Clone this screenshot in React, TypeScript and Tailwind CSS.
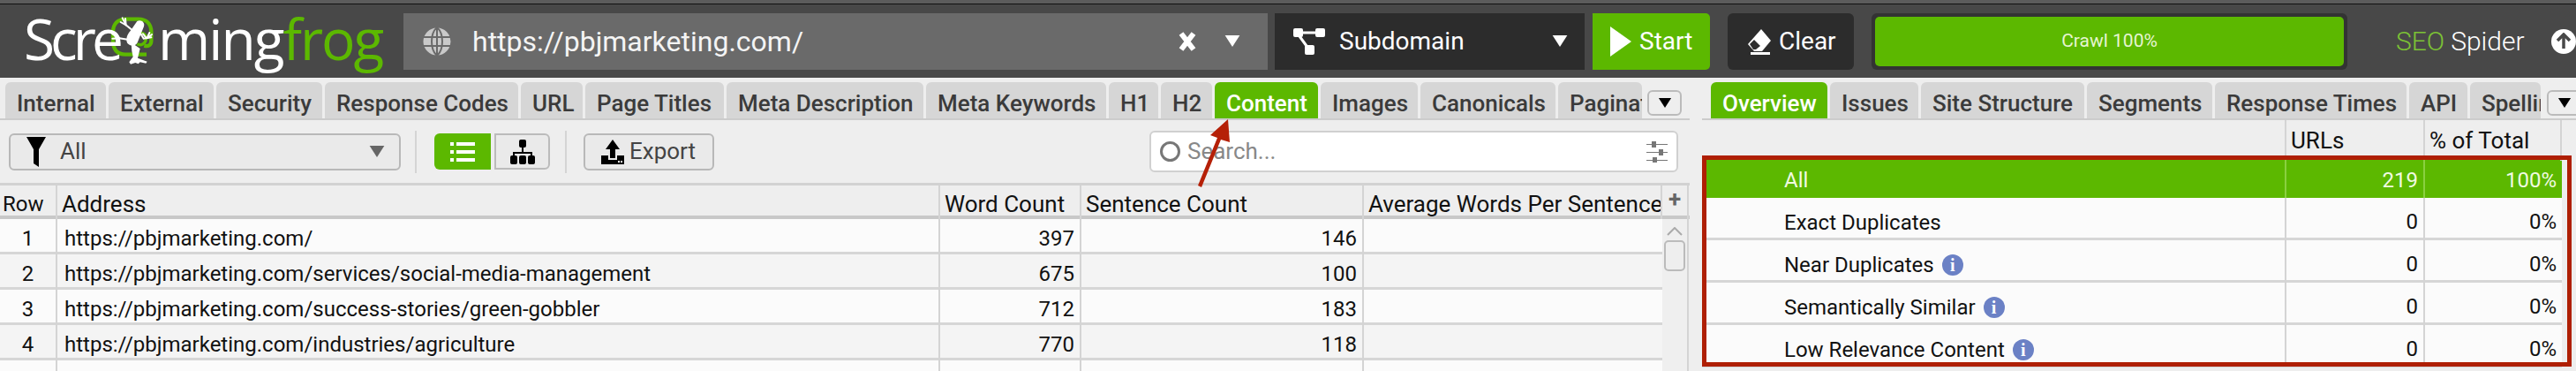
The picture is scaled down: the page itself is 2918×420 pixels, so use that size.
const leftTabs = [
  { label: "Internal", width: "w-[114px]" },
  { label: "External", width: "w-[119px]" },
  { label: "Security", width: "w-[120px]" },
  { label: "Response Codes", width: "w-[219px]" },
  { label: "URL", width: "w-[70px]" },
  { label: "Page Titles", width: "w-[157px]" },
  { label: "Meta Description", width: "w-[223px]" },
  { label: "Meta Keywords", width: "w-[204px]" },
  { label: "H1", width: "w-[56px]" },
  { label: "H2", width: "w-[58px]" },
  { label: "Content", width: "w-[117px]", active: true },
  { label: "Images", width: "w-[110px]" },
  { label: "Canonicals", width: "w-[153px]" },
  { label: "Pagination", width: "w-[95px]" },
];

const rightTabs = [
  { label: "Overview", width: "w-[132px]", active: true },
  { label: "Issues", width: "w-[100px]" },
  { label: "Site Structure", width: "w-[185px]" },
  { label: "Segments", width: "w-[142px]" },
  { label: "Response Times", width: "w-[217px]" },
  { label: "API", width: "w-[66px]" },
  { label: "Spelling", width: "w-[80px]" },
];

const urls = [
  { row: 1, address: "https://pbjmarketing.com/", words: 397, sentences: 146, bg: "bg-[#fbfbfb]" },
  { row: 2, address: "https://pbjmarketing.com/services/social-media-management", words: 675, sentences: 100, bg: "bg-[#f4f4f4]" },
  { row: 3, address: "https://pbjmarketing.com/success-stories/green-gobbler", words: 712, sentences: 183, bg: "bg-[#fbfbfb]" },
  { row: 4, address: "https://pbjmarketing.com/industries/agriculture", words: 770, sentences: 118, bg: "bg-[#f4f4f4]" },
];

const overview = [
  { name: "Exact Duplicates" },
  { name: "Near Duplicates", info: true },
  { name: "Semantically Similar", info: true },
  { name: "Low Relevance Content", info: true },
];

function Caret({ className }: { className: string }) {
  return (
    <svg viewBox="0 0 18 14" className={className}>
      <path d="M0 0H18L9 14Z" fill="currentColor" />
    </svg>
  );
}

function Tab({ label, width, active }: { label: string; width: string; active?: boolean }) {
  return (
    <div
      className={`${width} h-[41px] shrink-0 overflow-hidden whitespace-nowrap rounded-t-[6px] pl-[13px] text-[26px] leading-[49px] font-medium ${
        active ? "bg-[#5cb800] text-white" : "bg-[#d6d6d6] text-[#3b3b3b]"
      }`}
    >
      {label}
    </div>
  );
}

function OverflowButton({ className }: { className: string }) {
  return (
    <div className={`${className} flex h-[29px] w-[39px] shrink-0 items-center justify-center rounded-[6px] border-2 border-[#bbbbbb] bg-[#eeeeee]`}>
      <Caret className="h-[11px] w-[16px] text-black" />
    </div>
  );
}

function Frog() {
  return (
    <svg viewBox="0 0 225 225" className="h-[75px] w-[75px] shrink-0">
      <path d="M150 158H78C50 158 36 140 36 112V82C36 55 52 38 80 38H122C150 38 166 55 166 82V112C166 126 156 132 142 128" fill="none" stroke="#5cb800" strokeWidth="13" />
      <path d="M126 86C140 82 150 92 148 106C146 122 130 130 118 122" fill="none" stroke="#5cb800" strokeWidth="10" />
      <g fill="#fff">
        <path d="M118 45C130 38 146 48 141 63L119 118C112 132 94 130 85 120C78 107 84 90 95 78Z" />
        <path d="M98 118L128 138L120 170L152 182L148 188L128 184L122 190L112 186L96 191L91 184L104 166L100 146Z" />
      </g>
      <g fill="none" stroke="#fff" strokeWidth="6" strokeLinecap="round">
        <path d="M102 76L80 58L68 34" />
        <path d="M80 58L62 48M80 58L78 36" />
        <path d="M90 108L58 103L34 88" />
        <path d="M58 103L34 104M58 103L44 84" />
        <path d="M128 84L140 104L166 100" />
        <path d="M150 103L138 88M152 102L160 84M154 102L168 90" />
      </g>
    </svg>
  );
}

function Logo() {
  return (
    <div className="flex h-full w-[430px] shrink-0 items-center font-['Open_Sans'] text-[64px] leading-none text-white">
      <span className="w-[92px] shrink-0 -translate-y-[3px] tracking-[-5px]">Scre</span>
      <span className="-ml-[3px] -mr-[12px]"><Frog /></span>
      <span className="-translate-y-[3px] tracking-[-2px]">ming</span>
      <span className="-translate-y-[3px] tracking-[-2px] text-[#5cb800]">frog</span>
    </div>
  );
}

function Globe() {
  return (
    <svg viewBox="0 0 32 32" className="h-[32px] w-[32px] shrink-0">
      <circle cx="16" cy="16" r="15.5" fill="#c9c9c9" />
      <path d="M0 11H32M0 21H32M16 0V32" stroke="#6a6a6a" strokeWidth="2" />
      <path d="M16 0C8 7 8 25 16 32M16 0C24 7 24 25 16 32" fill="none" stroke="#6a6a6a" strokeWidth="2" />
    </svg>
  );
}

function SubdomainIcon() {
  return (
    <svg viewBox="0 0 36 30" className="h-[30px] w-[36px] shrink-0">
      <g fill="#fff">
        <rect x="0" y="0" width="11" height="10" rx="2" />
        <rect x="25" y="0" width="11" height="10" rx="2" />
        <rect x="13" y="19" width="11" height="11" rx="2" />
      </g>
      <path d="M10 5H26M7 9L15 20" stroke="#fff" strokeWidth="3" />
    </svg>
  );
}

function Eraser() {
  return (
    <svg viewBox="0 0 28 30" className="h-[30px] w-[28px] shrink-0">
      <path d="M16 1L27 14L17 26H8L1 18Z" fill="#fff" />
      <path d="M8 13L15 20L10 24H7L3 18Z" fill="#2c2c2c" />
      <rect x="4" y="27" width="22" height="3" fill="#fff" />
    </svg>
  );
}

function ListIcon() {
  return (
    <svg viewBox="0 0 28 24" className="h-[24px] w-[28px]">
      <path d="M0 1H4V5H0ZM7 1H28V5H7ZM0 10H4V14H0ZM7 10H28V14H7ZM0 19H4V23H0ZM7 19H28V23H7Z" fill="#fff" />
    </svg>
  );
}

function TreeIcon() {
  return (
    <svg viewBox="0 0 28 28" className="h-[28px] w-[28px]">
      <rect x="10" y="0" width="8" height="9" rx="2" />
      <path d="M14 8V16M4 20V15H24V20" fill="none" stroke="#000" strokeWidth="2" />
      <rect x="0" y="18" width="8" height="10" rx="2" />
      <rect x="10" y="18" width="8" height="10" rx="2" />
      <rect x="20" y="18" width="8" height="10" rx="2" />
    </svg>
  );
}

function ExportIcon() {
  return (
    <svg viewBox="0 0 26 28" className="h-[28px] w-[26px] shrink-0">
      <path d="M13 0L21 11H16V21H10V11H5Z" fill="#000" />
      <path d="M0 18H8V23H18V18H26V28H0Z" fill="#000" />
      <rect x="19" y="24" width="2" height="2" fill="#fff" />
      <rect x="22" y="24" width="2" height="2" fill="#fff" />
    </svg>
  );
}

function SlidersIcon() {
  return (
    <svg viewBox="0 0 24 24" className="h-[24px] w-[24px] shrink-0" fill="#777777">
      <path d="M0 3H24V4H0ZM0 12H24V13H0ZM0 21H24V22H0Z" />
      <rect x="6" y="0" width="5" height="7" />
      <rect x="14" y="9" width="5" height="7" />
      <rect x="7" y="18" width="5" height="7" />
    </svg>
  );
}

function InfoIcon() {
  return (
    <span className="ml-[9px] flex h-[24px] w-[24px] shrink-0 items-center justify-center rounded-full bg-[#6b81c5] font-['Liberation_Serif'] text-[20px] leading-none font-bold text-white">
      i
    </span>
  );
}

function App() {
  return (
    <div className="relative h-[420px] w-[2918px] overflow-hidden bg-[#eeeeee] font-['Roboto',sans-serif]">
      <div className="h-[4px] bg-[#5c5c5c]" />
      <div className="h-[1px] bg-[#111111]" />
      <div className="flex h-[83px] items-center bg-[#484848] pl-[27px] text-white">
        <Logo />
        <div className="flex h-[64px] w-[979px] shrink-0 items-center bg-[#6a6a6a] pl-[22px]">
          <Globe />
          <span className="ml-[24px] text-[32px] text-[#f4f4f4]">https://pbjmarketing.com/</span>
          <svg viewBox="0 0 20 24" className="ml-auto h-[24px] w-[20px] shrink-0">
            <path d="M3 3L17 21M17 3L3 21" fill="none" stroke="#fff" strokeWidth="6" />
          </svg>
          <Caret className="mr-[31px] ml-[32px] h-[13px] w-[18px] text-white" />
        </div>
        <div className="ml-[8px] flex h-[64px] w-[351px] shrink-0 items-center bg-[#2c2c2c] pl-[21px]">
          <SubdomainIcon />
          <span className="ml-[16px] text-[28px]">Subdomain</span>
          <Caret className="mr-[19px] ml-auto h-[13px] w-[18px] text-white" />
        </div>
        <div className="ml-[9px] flex h-[64px] w-[133px] shrink-0 items-center rounded-r-[5px] bg-[#5cb800] pl-[20px]">
          <svg viewBox="0 0 24 38" className="h-[38px] w-[24px] shrink-0">
            <path d="M0 2L24 19L0 36Z" fill="#fff" />
          </svg>
          <span className="ml-[9px] text-[28px]">Start</span>
        </div>
        <div className="ml-[20px] flex h-[64px] w-[143px] shrink-0 items-center rounded-[6px] bg-[#2c2c2c] pl-[22px]">
          <Eraser />
          <span className="ml-[8px] text-[28px]">Clear</span>
        </div>
        <div className="ml-[20px] flex h-[64px] w-[539px] shrink-0 rounded-[6px] bg-[#333333] py-[4px] pr-[4px] pl-[4px]">
          <div className="flex w-full items-center justify-center rounded-[5px] bg-[#5cb800] text-[21px] text-[#e6f5d0]">
            Crawl 100%
          </div>
        </div>
        <div className="ml-[55px] flex items-center text-[30px] font-light">
          <span className="text-[#7cc235]">SEO</span>
          <span className="ml-[7px]">Spider</span>
        </div>
        <div className="ml-[30px] flex h-[28px] w-[28px] shrink-0 items-center justify-center rounded-full bg-white">
          <svg viewBox="0 0 20 20" className="h-[20px] w-[20px]">
            <path d="M10 2V18M3 9L10 2L17 9" fill="none" stroke="#484848" strokeWidth="3.5" />
          </svg>
        </div>
      </div>

      <div className="flex">
        <div className="w-[1914px] shrink-0">
          <div className="flex h-[48px] items-end gap-[3px] border-b-[2px] border-[#cccccc] pl-[6px]">
            {leftTabs.map((t) => (
              <Tab key={t.label} label={t.label} width={t.width} active={t.active} />
            ))}
            <OverflowButton className="mb-[3px] ml-[3px]" />
          </div>

          <div className="flex h-[71px] items-center pl-[10px]">
            <div className="flex h-[42px] w-[444px] shrink-0 items-center rounded-[6px] border-2 border-[#b8b8b8] bg-[#eaeaea] pl-[18px]">
              <svg viewBox="0 0 22 34" className="h-[34px] w-[22px] shrink-0">
                <path d="M0 0H22L14 14V34L8 30V14Z" fill="#000" />
              </svg>
              <span className="ml-[16px] text-[26px] text-[#444444]">All</span>
              <Caret className="mr-[16px] ml-auto h-[13px] w-[18px] text-[#666666]" />
            </div>
            <div className="ml-[16px] h-[48px] w-[2px] shrink-0 bg-[#d4d4d4]" />
            <div className="ml-[20px] flex h-[41px] w-[64px] shrink-0 items-center justify-center rounded-l-[6px] bg-[#5cb800]">
              <ListIcon />
            </div>
            <div className="ml-[4px] flex h-[41px] w-[63px] shrink-0 items-center justify-center rounded-r-[6px] border-2 border-[#bbbbbb] bg-[#eaeaea]">
              <TreeIcon />
            </div>
            <div className="ml-[17px] h-[48px] w-[2px] shrink-0 bg-[#d4d4d4]" />
            <div className="ml-[19px] flex h-[42px] w-[148px] shrink-0 items-center rounded-[6px] border-2 border-[#b8b8b8] bg-[#eaeaea] pl-[18px]">
              <ExportIcon />
              <span className="ml-[6px] text-[26px] text-[#444444]">Export</span>
            </div>
            <div className="ml-[493px] flex h-[47px] w-[599px] shrink-0 items-center rounded-[6px] border-2 border-[#d0d0d0] bg-white pl-[10px]">
              <div className="h-[23px] w-[23px] shrink-0 rounded-full border-[3px] border-[#777777]" />
              <span className="ml-[8px] text-[26px] text-[#888888]">Search...</span>
              <span className="mr-[10px] ml-auto"><SlidersIcon /></span>
            </div>
          </div>

          <div className="border-t-[3px] border-[#d2d2d2]">
            <div className="grid h-[38px] grid-cols-[65px_1000px_160px_320px_338px_30px] border-b-[4px] border-[#c8c8c8] bg-[#eeeeee] text-[26px] leading-[42px] text-[#111111]">
              <div className="border-r-2 border-[#d4d4d4] pl-[3px] text-[24px]">Row</div>
              <div className="border-r-2 border-[#d4d4d4] pl-[5px]">Address</div>
              <div className="border-r-2 border-[#d4d4d4] pl-[5px]">Word Count</div>
              <div className="border-r-2 border-[#d4d4d4] pl-[5px]">Sentence Count</div>
              <div className="overflow-hidden border-r-2 border-[#d4d4d4] pl-[5px] whitespace-nowrap">Average Words Per Sentence</div>
              <div className="border-r-2 border-[#d4d4d4] text-center text-[26px] leading-[30px] font-bold text-[#666666]">+</div>
            </div>
            <div className="flex">
              <div className="w-[1883px] shrink-0">
                {urls.map((u) => (
                  <div key={u.row} className={`grid h-[40px] grid-cols-[65px_1000px_160px_320px_338px] border-b-[3px] border-[#d6d6d6] ${u.bg} text-[24px] leading-[45px] text-[#111111]`}>
                    <div className="border-r-2 border-[#d4d4d4] text-center">{u.row}</div>
                    <div className="border-r-2 border-[#d4d4d4] pl-[8px]">{u.address}</div>
                    <div className="border-r-2 border-[#d4d4d4] pr-[6px] text-right">{u.words}</div>
                    <div className="border-r-2 border-[#d4d4d4] pr-[6px] text-right">{u.sentences}</div>
                    <div />
                  </div>
                ))}
                <div className="grid h-[12px] grid-cols-[65px_1000px_160px_320px_338px] bg-[#fbfbfb]">
                  <div className="border-r-2 border-[#d4d4d4]" />
                  <div className="border-r-2 border-[#d4d4d4]" />
                  <div className="border-r-2 border-[#d4d4d4]" />
                  <div className="border-r-2 border-[#d4d4d4]" />
                  <div />
                </div>
              </div>
              <div className="flex w-[30px] shrink-0 flex-col items-center border-r-2 border-[#d4d4d4] bg-[#efefef] pt-[9px]">
                <svg viewBox="0 0 18 10" className="h-[10px] w-[18px]">
                  <path d="M1 9L9 1L17 9" fill="none" stroke="#aaaaaa" strokeWidth="2" />
                </svg>
                <div className="mt-[5px] h-[35px] w-[24px] rounded-[5px] border-2 border-[#bbbbbb] bg-[#eeeeee]" />
              </div>
            </div>
          </div>
        </div>

        <div className="ml-[14px] min-w-0 flex-1">
          <div className="flex h-[48px] items-end gap-[3px] border-b-[2px] border-[#cccccc] pl-[10px]">
            {rightTabs.map((t) => (
              <Tab key={t.label} label={t.label} width={t.width} active={t.active} />
            ))}
            <OverflowButton className="mb-[3px] ml-[4px]" />
          </div>
          <div className="grid h-[40px] grid-cols-[662px_157px_155px] text-[26px] leading-[46px] text-[#111111]">
            <div className="border-r-2 border-[#d4d4d4]" />
            <div className="border-r-2 border-[#d4d4d4] pl-[5px]">URLs</div>
            <div className="border-r-2 border-[#d4d4d4] pl-[5px]">% of Total</div>
          </div>
          <div className="grid h-[48px] w-[974px] grid-cols-[662px_157px_155px] bg-[#5cb800] text-[24px] leading-[40px] text-[#f0fae0]">
            <div className="border-r-2 border-[#8ad040] pt-[8px] pl-[93px]">All</div>
            <div className="border-r-2 border-[#8ad040] pt-[8px] pr-[6px] text-right">219</div>
            <div className="pt-[8px] pr-[6px] text-right">100%</div>
          </div>
          {overview.map((o) => (
            <div key={o.name} className="grid h-[48px] w-[974px] grid-cols-[662px_157px_155px] border-b-[3px] border-[#d6d6d6] bg-[#fbfbfb] text-[24px] leading-[40px] text-[#111111]">
              <div className="flex items-center border-r-2 border-[#d4d4d4] pt-[8px] pl-[93px]">
                {o.name}
                {o.info && <InfoIcon />}
              </div>
              <div className="border-r-2 border-[#d4d4d4] pt-[7px] pr-[6px] text-right">0</div>
              <div className="pt-[7px] pr-[6px] text-right">0%</div>
            </div>
          ))}
        </div>
      </div>

      {/* annotations drawn over the screenshot */}
      <div className="absolute top-[176px] left-[1928px] h-[239px] w-[985px] border-[5px] border-[#af1f04]" />
      <svg viewBox="0 0 50 90" className="absolute top-[130px] left-[1350px] h-[90px] w-[50px]">
        <path d="M41 5L21 23L29 26L7 80L11 82L33 28L43 31Z" fill="#b52007" />
      </svg>
    </div>
  );
}

export default App;
